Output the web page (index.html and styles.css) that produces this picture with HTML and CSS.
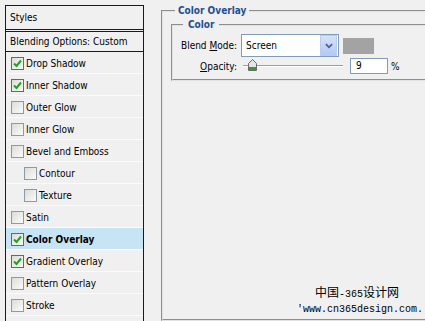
FILE: index.html
```html
<!DOCTYPE html>
<html lang="en">
  <head>
    <meta charset="UTF-8" />
    <title>Layer Style</title>
    <link rel="stylesheet" href="styles.css">
  </head>
  <body>
    <div class="dialog">
      <div class="styles-panel">
        <div class="panel-head">Styles</div>
        <div class="panel-blend">Blending Options: Custom</div>
        <ul class="fx-list">
          <li class="fx"><span class="box on"><svg viewBox="0 0 11 11"><polyline points="2,5.5 4.5,8 9,2.5" /></svg></span>Drop Shadow</li>
          <li class="fx"><span class="box on"><svg viewBox="0 0 11 11"><polyline points="2,5.5 4.5,8 9,2.5" /></svg></span>Inner Shadow</li>
          <li class="fx"><span class="box"></span>Outer Glow</li>
          <li class="fx"><span class="box"></span>Inner Glow</li>
          <li class="fx"><span class="box"></span>Bevel and Emboss</li>
          <li class="fx sub"><span class="box"></span>Contour</li>
          <li class="fx sub"><span class="box"></span>Texture</li>
          <li class="fx"><span class="box"></span>Satin</li>
          <li class="fx active"><span class="box on"><svg viewBox="0 0 11 11"><polyline points="2,5.5 4.5,8 9,2.5" /></svg></span>Color Overlay</li>
          <li class="fx"><span class="box on"><svg viewBox="0 0 11 11"><polyline points="2,5.5 4.5,8 9,2.5" /></svg></span>Gradient Overlay</li>
          <li class="fx"><span class="box"></span>Pattern Overlay</li>
          <li class="fx"><span class="box"></span>Stroke</li>
        </ul>
      </div>

      <div class="settings">
        <fieldset class="group">
          <legend class="group-title">Color Overlay</legend>
          <fieldset class="group inner">
            <legend class="group-title">Color</legend>
            <div class="field-row">
              <span class="label">Blend <u>M</u>ode:</span>
              <div class="select">
                <span>Screen</span>
                <span class="select-btn">
                  <svg viewBox="0 0 9 6"><polyline points="1,1 4.5,4.5 8,1" /></svg>
                </span>
              </div>
              <span class="swatch"></span>
            </div>
            <div class="field-row">
              <span class="label"><u>O</u>pacity:</span>
              <div class="slider">
                <span class="thumb">
                  <svg viewBox="0 0 9 12">
                    <path d="M0.5 4.5 L4.5 0.5 L8.5 4.5 L8.5 11.5 L0.5 11.5 Z" fill="#e4e4e4" stroke="#6b6b6b" />
                    <rect x="1" y="8" width="7" height="3" fill="#2f9a3a" />
                  </svg>
                </span>
              </div>
              <span class="num-input">9</span>
              <span class="unit">%</span>
            </div>
          </fieldset>
        </fieldset>
      </div>
    </div>

    <div class="watermark">
      <div class="wm-cn"><span class="cjk">中国</span><span class="mono">-365</span><span class="cjk">设计网</span></div>
      <div class="mono">'www.cn365design.com.</div>
    </div>
  </body>
</html>
```

FILE: styles.css
```css
body {
  margin: 0;
  height: 321px;
  overflow: hidden;
  background: #f0f0f0;
  font-family: 'DejaVu Sans', Tahoma, sans-serif;
  font-stretch: condensed;
  font-size: 10px;
  color: #000;
}

.dialog {
  display: flex;
  align-items: flex-start;
}

/* left list of effects */
.styles-panel {
  flex-shrink: 0;
  width: 137px;
  height: 315px;
  margin: 5px 0 0 5px;
  border: 1px solid #1a1a1a;
  border-bottom: none;
  overflow: hidden;
}

.panel-head {
  height: 23px;
  line-height: 24px;
  padding-left: 4px;
  border-bottom: 3px double #1a1a1a;
}

.panel-blend {
  height: 19px;
  line-height: 20px;
  padding-left: 4px;
  border-bottom: 1px solid #1a1a1a;
}

.fx-list {
  list-style-type: none;
  margin: 0;
  padding: 0;
}

.fx {
  display: flex;
  align-items: center;
  gap: 2px;
  height: 21px;
  padding-left: 5px;
  padding-top: 1px;
  box-sizing: border-box;
  height: 22px;
  border-bottom: 1px solid #fbfbfb;
}

.fx.sub {
  padding-left: 18px;
}

.fx.active {
  background: #c7e4f4;
  font-weight: bold;
}

.box {
  display: flex;
  align-items: center;
  justify-content: center;
  width: 11px;
  height: 11px;
  border: 1px solid #8c9aa6;
  background: linear-gradient(135deg, #dcdcd6, #fbfbfb);
}

.box.on {
  border-color: #4f6f84;
}

.box svg {
  width: 11px;
  height: 11px;
  fill: none;
  stroke: #21a121;
  stroke-width: 2;
}

/* right side settings */
.settings {
  flex: 1;
  min-width: 0;
  height: 317px;
  margin: 4px 0 0 17px;
  overflow: hidden;
}

.group {
  box-sizing: border-box;
  margin: 0;
  padding: 1px 0 0 8px;
  border: 2px groove #e2e2e2;
  border-right: none;
  width: 300px;
  height: 317px;
}

.group.inner {
  width: 300px;
  height: auto;
  padding: 3px 0 5px 0;
}

.group-title {
  margin-left: 4px;
  padding: 0 3px;
  line-height: 13px;
  font-size: 10px;
  font-weight: bold;
  color: #1f4f92;
}

.inner > .group-title {
  margin-left: 10px;
  padding: 0 5px;
}

.field-row {
  display: flex;
  align-items: center;
}

.field-row + .field-row {
  height: 16px;
  margin-top: 1px;
}

.label {
  width: 64px;
  padding-right: 4px;
  text-align: right;
}

.select {
  display: flex;
  align-items: center;
  justify-content: space-between;
  box-sizing: border-box;
  width: 98px;
  height: 23px;
  padding: 1px 1px 1px 4px;
  border: 1px solid #7f9db9;
  background: #fff;
}

.select-btn {
  display: flex;
  align-items: center;
  justify-content: center;
  width: 15px;
  height: 19px;
  border: 1px solid #b9cbf0;
  background: linear-gradient(#d6e2fb, #b5c9f4);
}

.select-btn svg {
  width: 8px;
  height: 6px;
  fill: none;
  stroke: #4d6185;
  stroke-width: 2;
}

.swatch {
  width: 31px;
  height: 16px;
  margin-left: 4px;
  background: #a3a3a3;
}

.slider {
  position: relative;
  width: 100px;
  height: 16px;
  margin-left: 2px;
}

.slider::before {
  content: '';
  position: absolute;
  left: 0;
  right: 0;
  top: 7px;
  border-top: 1px solid #9d9d9d;
  border-bottom: 1px solid #fff;
}

.thumb {
  position: absolute;
  left: 5px;
  top: 1px;
  width: 9px;
  height: 12px;
}

.thumb svg {
  display: block;
  width: 9px;
  height: 12px;
}

.num-input {
  box-sizing: border-box;
  width: 38px;
  height: 16px;
  margin-left: 7px;
  padding-left: 5px;
  line-height: 14px;
  border: 1px solid #7f9db9;
  background: #fff;
}

.unit {
  margin-left: 3px;
}

/* watermark over the corner */
.watermark {
  position: absolute;
  left: 297px;
  top: 284px;
  width: 126px;
  line-height: 15px;
}

.wm-cn {
  padding-left: 18px;
}

.cjk {
  font-family: 'Noto Sans CJK SC', sans-serif;
  font-size: 12px;
}

.mono {
  font-family: 'Liberation Mono', monospace;
  font-stretch: normal;
  font-size: 10px;
}
```
